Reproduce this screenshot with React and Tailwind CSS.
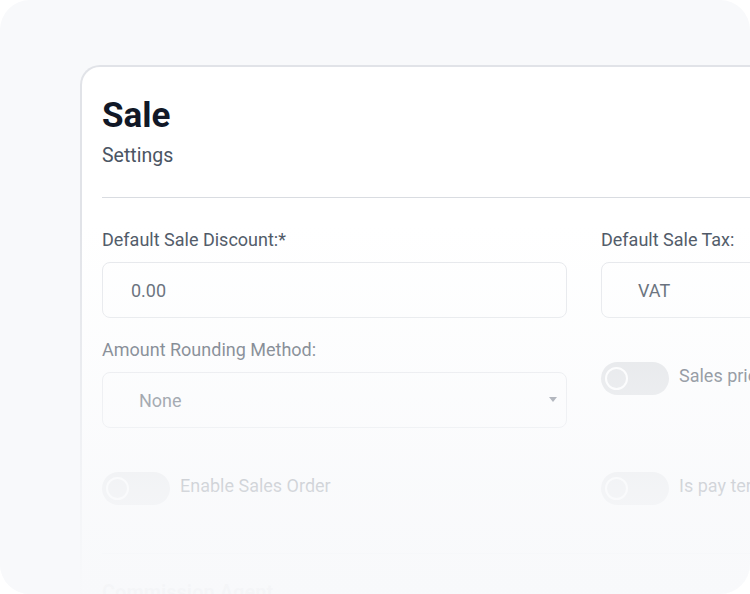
function Field({ label, value, select, pad = 'pl-7' }) {
  return (
    <div className="flex flex-col">
      <label className="whitespace-nowrap text-[18px] leading-[26px] text-[#4b5563]">{label}</label>
      <div className="relative mt-[9px] flex h-14 items-center rounded-lg border border-[#e5e7eb] bg-white">
        <span className={`${pad} text-[18px] text-[#4b5563]`}>{value}</span>
        {select && (
          <span className="absolute right-[9px] top-[24px] h-0 w-0 border-x-[4px] border-t-[5px] border-x-transparent border-t-[#6b7280]" />
        )}
      </div>
    </div>
  )
}

function Toggle({ label }) {
  return (
    <div className="flex items-center gap-[10px]">
      <div className="flex h-[33px] w-[68px] shrink-0 items-center rounded-full bg-[#dfe1e4] pl-[4px]">
        <div className="h-[23px] w-[23px] rounded-full border-2 border-white" />
      </div>
      <span className="-mt-[7px] whitespace-nowrap text-[18px] text-[#4b5563]">{label}</span>
    </div>
  )
}

export default function App() {
  return (
    <div className="relative h-[594px] w-[750px] overflow-hidden rounded-[30px] bg-[#f8f9fb] font-['Roboto',sans-serif]">
      <div className="pl-[80px] pt-[65px]">
        <div className="h-[560px] w-[720px] rounded-tl-[20px] border-l-2 border-t-2 border-[#e1e3e8] bg-white pl-5 pt-[28px]">
          <h1 className="text-[35px] font-bold leading-[42px] text-[#111827]">Sale</h1>
          <p className="mt-[5px] text-[19.5px] leading-[28px] text-[#4b5563]">Settings</p>
          <div className="mt-[27px] h-px bg-[#d9dce1]" />

          <div className="mt-[29px] grid grid-cols-[465px_465px] gap-x-[34px]">
            <Field label="Default Sale Discount:*" value="0.00" />
            <Field label="Default Sale Tax:" value="VAT" pad="pl-9" select />

            <div className="mt-[19px]">
              <Field label="Amount Rounding Method:" value="None" pad="pl-9" select />
            </div>
            <div className="mt-[44px]">
              <Toggle label="Sales price include tax" />
            </div>

            <div className="mt-[44px]">
              <Toggle label="Enable Sales Order" />
            </div>
            <div className="mt-[44px]">
              <Toggle label="Is pay term required" />
            </div>
          </div>

          <div className="mt-[48px] h-px bg-[#e5e7eb]" />
          <h2 className="mt-[24px] text-[20px] font-bold leading-7 text-[#111827]">Commission Agent</h2>
        </div>
      </div>
      <div className="pointer-events-none absolute inset-0 bg-[linear-gradient(to_bottom,rgba(248,249,251,0)_225px,rgba(248,249,251,0.36)_350px,rgba(248,249,251,0.78)_485px,rgba(248,249,251,0.985)_585px)]" />
    </div>
  )
}
